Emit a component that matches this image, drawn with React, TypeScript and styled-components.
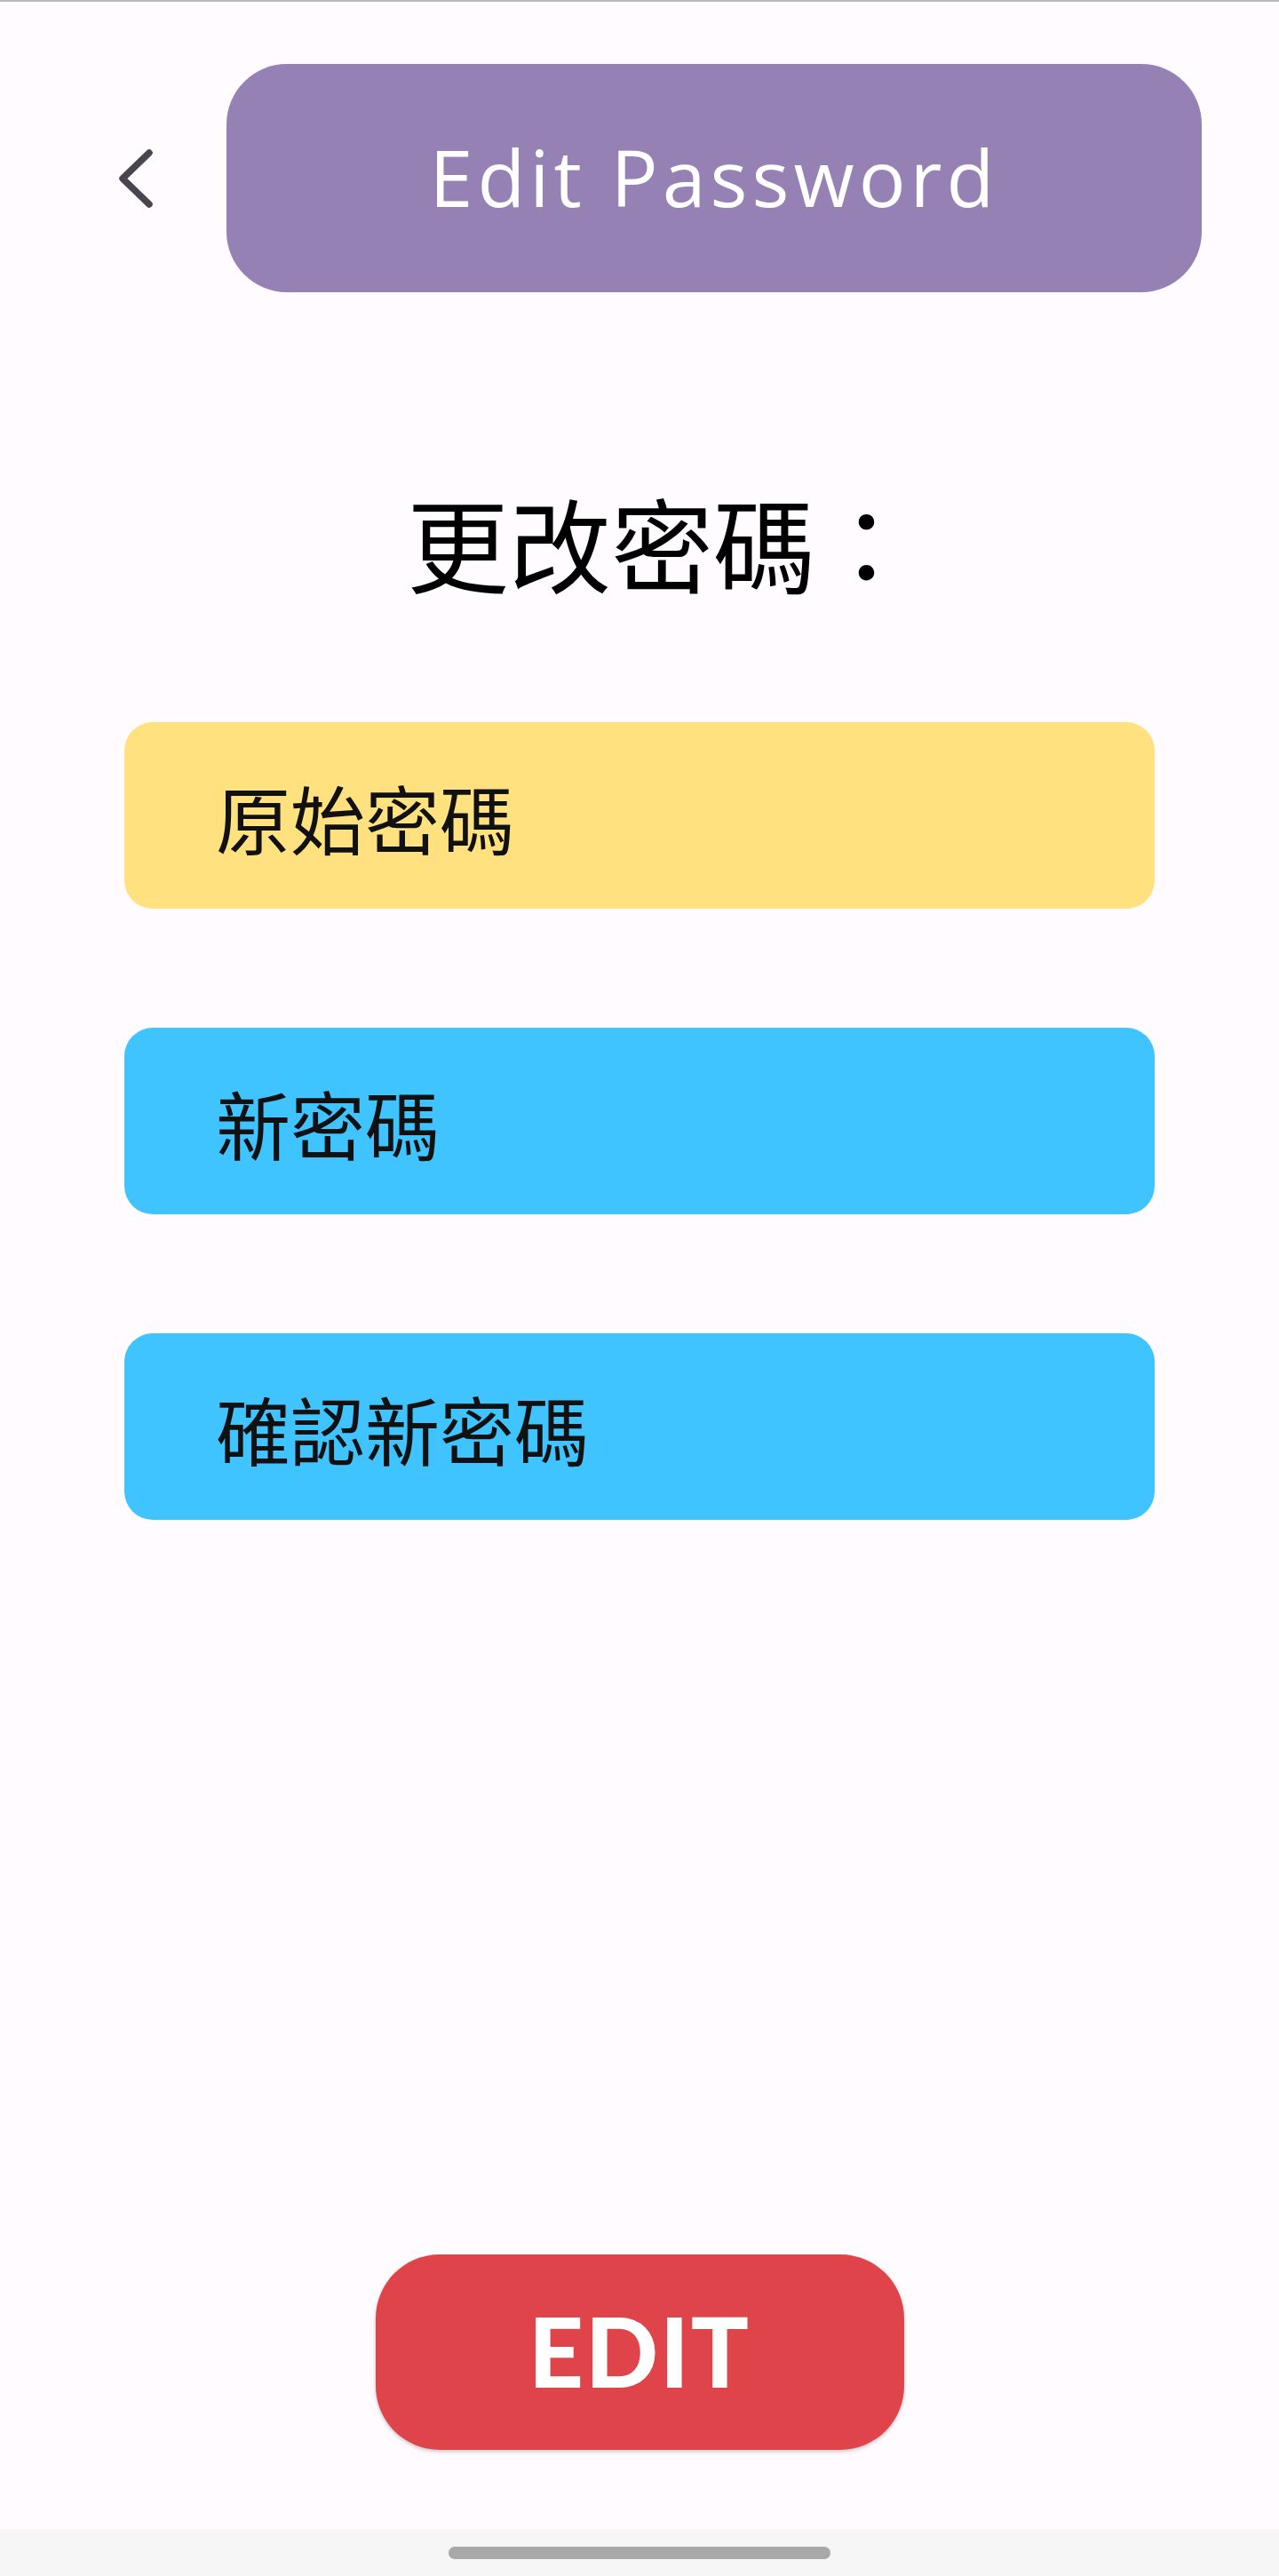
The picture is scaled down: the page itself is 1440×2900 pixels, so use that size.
import React from "react";
import styled, { createGlobalStyle } from "styled-components";

const GlobalStyle = createGlobalStyle`
  html, body {
    margin: 0;
    padding: 0;
    background: #fffbfe;
  }
  * { box-sizing: border-box; }
`;

const Page = styled.div`
  width: 1440px;
  min-height: 2900px;
  display: flex;
  flex-direction: column;
  background: #fffbfe;
  font-family: "Noto Sans CJK TC", "Noto Sans", sans-serif;
`;

const StatusLine = styled.div`
  height: 2px;
  background: #bdbabf;
`;

const Header = styled.header`
  display: flex;
  align-items: center;
  margin-top: 70px;
  padding: 0 87px 0 120px;
`;

const BackButton = styled.button`
  width: 66px;
  height: 66px;
  padding: 0;
  border: none;
  background: transparent;
  margin-right: 69px;
  display: flex;
  cursor: pointer;
`;

const TitlePill = styled.div`
  flex: 1;
  height: 257px;
  border-radius: 68px;
  background: #9681b4;
  display: flex;
  align-items: center;
  justify-content: center;
  color: #ffffff;
  font-family: "Open Sans", "Noto Sans", sans-serif;
  font-weight: 400;
  font-size: 88px;
  letter-spacing: 5px;
  padding-bottom: 4px;
`;

const Heading = styled.h1`
  margin: 223px 0 0;
  padding-left: 458px;
  font-size: 115px;
  line-height: 1;
  font-weight: 400;
  color: #000;
  font-family: "Noto Sans CJK TC", sans-serif;
`;

const Fields = styled.div`
  display: flex;
  flex-direction: column;
  gap: 134px;
  margin: 146px 140px 0;
`;

const Field = styled.div<{ $tone: "yellow" | "blue" }>`
  height: 210px;
  border-radius: 32px;
  background: ${(p) => (p.$tone === "yellow" ? "#ffe27f" : "#40c4ff")};
  display: flex;
  align-items: center;
  padding: 4px 0 0 103px;
  font-family: "Noto Sans CJK TC", sans-serif;
  font-size: 84px;
  line-height: 1;
  color: #111;
`;

const ButtonRow = styled.div`
  margin-top: auto;
  margin-bottom: 89px;
  display: flex;
  justify-content: center;
`;

const EditButton = styled.button`
  width: 595px;
  height: 220px;
  border: none;
  border-radius: 72px;
  background: #e0444b;
  box-shadow: 0 2px 4px rgba(0, 0, 0, 0.22);
  color: #fff;
  font-family: Lato, "Open Sans", sans-serif;
  font-weight: 900;
  font-size: 108px;
  letter-spacing: 2px;
  display: flex;
  align-items: center;
  justify-content: center;
  padding: 0 0 4px;
  cursor: pointer;
`;

const NavBar = styled.div`
  height: 53px;
  background: #f5f6f5;
  display: flex;
  justify-content: center;
  padding-top: 20px;
`;

const Handle = styled.div`
  width: 430px;
  height: 14px;
  border-radius: 7px;
  background: #a9a9a9;
`;

const fields: { label: string; tone: "yellow" | "blue" }[] = [
  { label: "原始密碼", tone: "yellow" },
  { label: "新密碼", tone: "blue" },
  { label: "確認新密碼", tone: "blue" },
];

export default function App() {
  return (
    <>
      <GlobalStyle />
      <Page>
        <StatusLine />
        <Header>
          <BackButton aria-label="back">
            <svg width="66" height="66" viewBox="0 0 66 66">
              <path
                d="M48 4 L18 33 L48 62"
                fill="none"
                stroke="#49454f"
                strokeWidth="7.5"
                strokeLinecap="round"
                strokeLinejoin="round"
              />
            </svg>
          </BackButton>
          <TitlePill>Edit Password</TitlePill>
        </Header>
        <Heading>更改密碼：</Heading>
        <Fields>
          {fields.map((f) => (
            <Field key={f.label} $tone={f.tone}>
              {f.label}
            </Field>
          ))}
        </Fields>
        <ButtonRow>
          <EditButton>EDIT</EditButton>
        </ButtonRow>
        <NavBar>
          <Handle />
        </NavBar>
      </Page>
    </>
  );
}
